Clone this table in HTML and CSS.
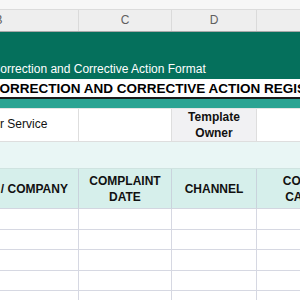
FILE: index.html
```html
<!DOCTYPE html>
<html lang="en">
<head>
    <meta charset="UTF-8">
    <title>Customer Complaint Register</title>
    <link rel="stylesheet" href="styles.css">
</head>
<body>
    <div class="ribbon"></div>

    <div class="sheet">
        <div class="row col-letters">
            <div class="cell">A</div>
            <div class="cell">B</div>
            <div class="cell">C</div>
            <div class="cell">D</div>
            <div class="cell">E</div>
        </div>

        <div class="banner">Customer Complaint Correction and Corrective Action Format</div>
        <div class="title">CUSTOMER COMPLAINT CORRECTION AND CORRECTIVE ACTION REGISTER</div>
        <div class="accent"></div>

        <div class="row info-row">
            <div class="cell margin-col"></div>
            <div class="cell service">Customer Service</div>
            <div class="cell"></div>
            <div class="cell label">Template<br>Owner</div>
            <div class="cell"></div>
        </div>

        <div class="spacer"></div>

        <div class="row head-row">
            <div class="cell margin-col"></div>
            <div class="cell">CUSTOMER / COMPANY</div>
            <div class="cell">COMPLAINT<br>DATE</div>
            <div class="cell">CHANNEL</div>
            <div class="cell">COMPLAINT<br>CATEGORY</div>
        </div>

        <div class="row data-row">
            <div class="cell margin-col"></div><div class="cell"></div><div class="cell"></div><div class="cell"></div><div class="cell"></div>
        </div>
        <div class="row data-row">
            <div class="cell margin-col"></div><div class="cell"></div><div class="cell"></div><div class="cell"></div><div class="cell"></div>
        </div>
        <div class="row data-row">
            <div class="cell margin-col"></div><div class="cell"></div><div class="cell"></div><div class="cell"></div><div class="cell"></div>
        </div>
        <div class="row data-row">
            <div class="cell margin-col"></div><div class="cell"></div><div class="cell"></div><div class="cell"></div><div class="cell"></div>
        </div>
        <div class="row data-row">
            <div class="cell margin-col"></div><div class="cell"></div><div class="cell"></div><div class="cell"></div><div class="cell"></div>
        </div>
    </div>
</body>
</html>
```

FILE: styles.css
```css
body {
    margin: 0;
    padding: 0;
    overflow: hidden;
    background: #ffffff;
    font-family: "Liberation Sans", Arial, sans-serif;
}

.ribbon {
    height: 9px;
    background: #f7f7f7;
    border-bottom: 1px solid #dcdcdc;
}

.sheet {
    margin-left: -123px;
    width: 504px;
}

.row {
    display: grid;
    grid-template-columns: 42px 160px 93px 85px 124px;
}

.col-letters {
    height: 21px;
    background: #eeeeee;
    border-bottom: 1px solid #a8a8a8;
}

.col-letters .cell {
    border-right: 1px solid #dadada;
    color: #5f5f5f;
    font-size: 12px;
    text-align: center;
    line-height: 21px;
}

.banner {
    height: 47px;
    background: #05705c;
    color: #ffffff;
    font-size: 12px;
    padding-left: 2px;
    box-sizing: border-box;
    display: flex;
    align-items: flex-end;
    padding-bottom: 3px;
    white-space: nowrap;
}

.title {
    height: 18px;
    line-height: 19px;
    font-size: 13.5px;
    font-weight: bold;
    color: #000000;
    white-space: nowrap;
    text-indent: -52px;
    border-bottom: 2px solid #1b1b1b;
}

.accent {
    height: 9px;
    background: #2ba493;
    border-bottom: 1px solid #e4e4e4;
}

.info-row {
    height: 32px;
}

.info-row .cell {
    border-right: 1px solid #dedede;
    border-bottom: 1px solid #dedede;
}

.info-row .margin-col {
    border-right: none;
}

.info-row .service {
    font-size: 12px;
    line-height: 31px;
    padding-left: 33px;
    color: #111111;
    white-space: nowrap;
}

.info-row .label {
    background: #f1f1f3;
    font-size: 12px;
    font-weight: bold;
    text-align: center;
    line-height: 16px;
    color: #111111;
}

.spacer {
    height: 27px;
    background: #e9f6f5;
    border-bottom: 1px solid #cfe3e0;
}

.head-row {
    height: 40px;
    background: #d6efeb;
}

.head-row .cell {
    display: flex;
    align-items: center;
    justify-content: center;
    text-align: center;
    font-size: 12px;
    font-weight: bold;
    line-height: 16px;
    color: #111111;
    white-space: nowrap;
    border-right: 1px solid #c9d3dc;
    border-bottom: 1px solid #d3d6e0;
}

.data-row {
    height: 20.5px;
}

.data-row .cell {
    border-right: 1px solid #d6d8e2;
    border-bottom: 1px solid #d6d8e2;
}
```
